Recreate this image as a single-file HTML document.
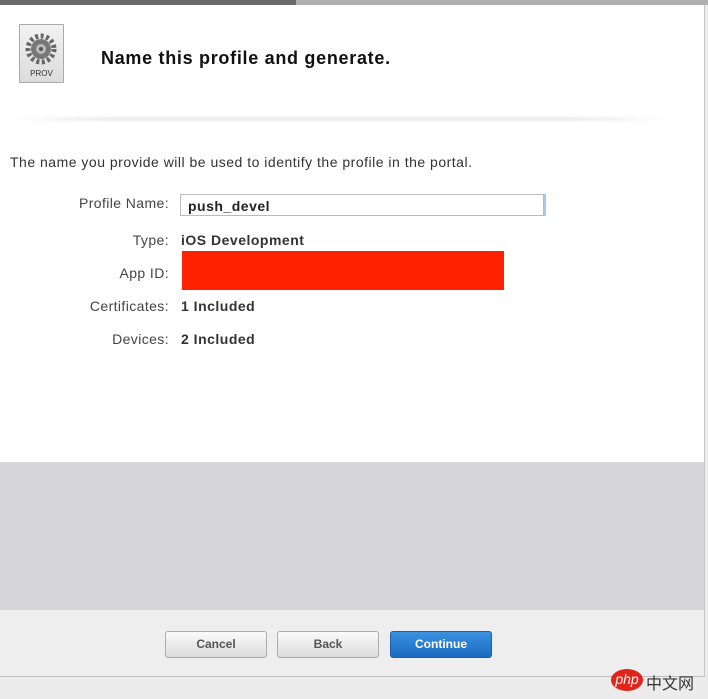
<!DOCTYPE html>
<html><head><meta charset="utf-8"><style>
*{margin:0;padding:0;box-sizing:border-box}
body{width:708px;height:699px;position:relative;background:#ececec;font-family:"Liberation Sans",sans-serif;overflow:hidden}
.a{position:absolute}
.lbl{position:absolute;right:539px;font-size:14px;color:#444;text-align:right;white-space:nowrap;letter-spacing:.4px}
.val{position:absolute;left:181px;font-size:14px;font-weight:bold;color:#333;white-space:nowrap;letter-spacing:.5px}
.btn{position:absolute;top:631px;width:102px;height:27px;border:1px solid #aaa;border-radius:3px;background:linear-gradient(#fafafa,#dcdcdc);font-size:12px;font-weight:bold;color:#555;text-align:center;line-height:25px}
</style></head><body>
<div class="a" style="left:0;top:0;width:708px;height:5px;background:#b0b0b0"></div>
<div class="a" style="left:0;top:0;width:296px;height:5px;background:#6a6a6a"></div>
<div class="a" style="left:0;top:5px;width:704px;height:457px;background:#fff"></div>
<div class="a" style="left:704px;top:5px;width:1px;height:672px;background:#c8c8c8"></div>
<div class="a" style="left:19px;top:24px;width:45px;height:59px;border:1px solid #aaa;background:linear-gradient(#f2f2f2,#dcdcdc);border-radius:1px"></div>
<svg class="a" style="left:24px;top:32px" width="34" height="34" viewBox="0 0 34 34"><circle cx="17" cy="17" r="13" fill="none" stroke="#666" stroke-width="5" stroke-dasharray="3 2.5"/><circle cx="17" cy="17" r="10" fill="#777"/><circle cx="17" cy="17" r="5" fill="#bbb"/><circle cx="17" cy="17" r="2" fill="#555"/></svg>
<div class="a" style="left:19px;top:69px;width:45px;text-align:center;font-size:8px;color:#333">PROV</div>
<div class="a" style="left:101px;top:48px;font-size:18px;font-weight:bold;color:#111;letter-spacing:.7px">Name this profile and generate.</div>
<div class="a" style="left:10px;top:117px;width:660px;height:4px;background:linear-gradient(90deg,rgba(0,0,0,0),rgba(0,0,0,.08) 15%,rgba(0,0,0,.08) 85%,rgba(0,0,0,0));filter:blur(1px)"></div>
<div class="a" style="left:10px;top:154px;font-size:14px;color:#333;letter-spacing:.5px">The name you provide will be used to identify the profile in the portal.</div>
<div class="lbl" style="top:195px">Profile Name:</div>
<div class="a" style="left:180px;top:194px;width:364px;height:22px;border:1px solid #bbb;font-size:14px;font-weight:bold;color:#222;padding:3px 0 0 7px;letter-spacing:.5px">push_devel</div>
<div class="a" style="left:544px;top:194px;width:2px;height:22px;background:#a8c8f0"></div>
<div class="lbl" style="top:232px">Type:</div><div class="val" style="top:232px">iOS Development</div>
<div class="lbl" style="top:265px">App ID:</div>
<div class="a" style="left:182px;top:251px;width:322px;height:39px;background:#ff2200"></div>
<div class="lbl" style="top:298px">Certificates:</div><div class="val" style="top:298px">1 Included</div>
<div class="lbl" style="top:331px">Devices:</div><div class="val" style="top:331px">2 Included</div>
<div class="a" style="left:0;top:462px;width:704px;height:148px;background:#d6d6d8"></div>
<div class="a" style="left:0;top:610px;width:705px;height:67px;background:#eeeeee;border-bottom:1px solid #bdbdbd;border-right:1px solid #c8c8c8;border-bottom-right-radius:3px"></div>
<div class="btn" style="left:165px">Cancel</div>
<div class="btn" style="left:277px">Back</div>
<div class="btn" style="left:390px;border-color:#1d5fa8;background:linear-gradient(#3a92e0,#1c6ac0);color:#fff">Continue</div>
<div class="a" style="left:611px;top:669px;width:32px;height:22px;border-radius:50%;background:#e0251b;color:#fff;font-size:14px;text-align:center;line-height:20px;font-style:italic">php</div>
<div class="a" style="left:646px;top:670px;font-size:16px;color:#333;font-family:'Liberation Sans','Noto Sans CJK SC',sans-serif">中文网</div>
</body></html>
